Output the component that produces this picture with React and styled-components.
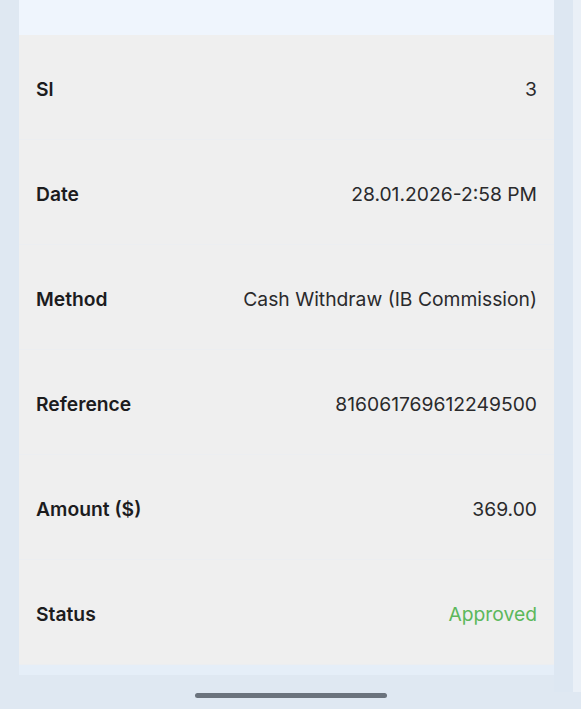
import styled, { createGlobalStyle } from 'styled-components'

const GlobalStyle = createGlobalStyle`
  html, body {
    margin: 0;
    padding: 0;
    background: #dfe8f2;
    font-family: Inter, "Noto Sans", "Liberation Sans", sans-serif;
  }
`

const Screen = styled.div`
  width: 581px;
  height: 709px;
  display: flex;
  flex-direction: column;
  overflow: hidden;
`

const Body = styled.div`
  display: flex;
  height: 692px;
`

const Gutter = styled.div`
  width: 19px;
  flex-shrink: 0;
`

const Card = styled.div`
  width: 535px;
  display: flex;
  flex-direction: column;
`

const TopStrip = styled.div`
  height: 35px;
  background: #eff5fd;
`

const Row = styled.div`
  height: 105px;
  box-sizing: border-box;
  padding: 2px 17px 0;
  display: flex;
  align-items: center;
  justify-content: space-between;
  background: #efefef;
  box-shadow: inset 0 -1px 0 #eceef1;
`

const Label = styled.span`
  font-size: 19.3px;
  font-weight: 600;
  color: #1c1c1e;
`

const Value = styled.span`
  font-size: 19.3px;
  font-weight: 400;
  color: ${props => props.status ? '#5cb85c' : '#2a2a2c'};
`

const BottomStrip = styled.div`
  height: 10px;
  background: #e5eef8;
`

const RightRail = styled.div`
  flex: 1;
  display: flex;
`

const RailInner = styled.div`
  width: 19px;
  background: #dde7f2;
`

const RailOuter = styled.div`
  flex: 1;
  background: #eaf0f7;
`

const HomeArea = styled.div`
  flex: 1;
  display: flex;
  justify-content: center;
  align-items: flex-start;
  padding-top: 1px;
`

const HomeBar = styled.div`
  width: 192px;
  height: 5px;
  border-radius: 3px;
  background: #6b737d;
`

const rows = [
  ['Sl', '3'],
  ['Date', '28.01.2026-2:58 PM'],
  ['Method', 'Cash Withdraw (IB Commission)'],
  ['Reference', '816061769612249500'],
  ['Amount ($)', '369.00'],
  ['Status', 'Approved'],
]

const App = () => {
  return (
    <>
      <GlobalStyle />
      <Screen>
        <Body>
          <Gutter />
          <Card>
            <TopStrip />
            {rows.map(([label, value]) => (
              <Row key={label}>
                <Label>{label}</Label>
                <Value status={label === 'Status'}>{value}</Value>
              </Row>
            ))}
            <BottomStrip />
          </Card>
          <RightRail>
            <RailInner />
            <RailOuter />
          </RightRail>
        </Body>
        <HomeArea>
          <HomeBar />
        </HomeArea>
      </Screen>
    </>
  )
}

export default App
